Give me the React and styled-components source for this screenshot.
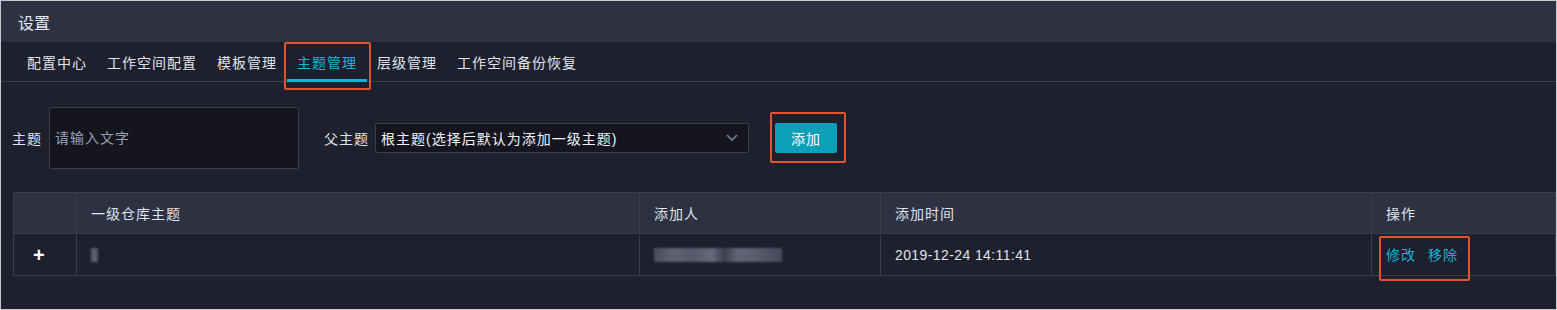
import React from "react";
import styled, { createGlobalStyle } from "styled-components";

const GlobalStyle = createGlobalStyle`
  html, body {
    margin: 0;
    padding: 0;
    background: #ffffff;
  }
  body {
    font-family: "Liberation Sans", "Noto Sans CJK SC", sans-serif;
    color: #dfe3ec;
  }
`;

const Frame = styled.div`
  width: 1557px;
  height: 310px;
  box-sizing: border-box;
  border: 1px solid #c9c9c9;
  background: #1f202d;
  overflow: hidden;
`;

const Header = styled.div`
  height: 41px;
  display: flex;
  align-items: center;
  padding-left: 17px;
  background: #2e3142;
  font-size: 16px;
  color: #e6e9f0;
`;

const Tabs = styled.div`
  height: 40px;
  box-sizing: border-box;
  display: flex;
  padding-left: 16px;
  border-bottom: 1px solid #3a3c4f;
`;

const Tab = styled.div`
  position: relative;
  display: flex;
  align-items: center;
  padding: 0 10px;
  font-size: 14px;
  letter-spacing: 1px;
  color: ${(p) => (p.$active ? "#16b7d4" : "#dfe3ec")};
  &::before {
    content: "";
    display: ${(p) => (p.$active ? "block" : "none")};
    position: absolute;
    left: 0;
    right: 0;
    bottom: -1px;
    height: 3px;
    background: #10b5d6;
  }
`;

const Marked = styled.div`
  position: relative;
  display: flex;
  &::after {
    content: "";
    position: absolute;
    top: ${(p) => p.$t}px;
    left: ${(p) => p.$l}px;
    right: ${(p) => p.$r}px;
    bottom: ${(p) => p.$b}px;
    border: 2px solid #e5522f;
    border-radius: 2px;
    pointer-events: none;
  }
`;

const Form = styled.div`
  display: flex;
  align-items: center;
  margin-top: 25px;
  padding-left: 11px;
`;

const Label = styled.span`
  font-size: 14px;
  letter-spacing: 1px;
  color: #dfe3ec;
  margin-right: ${(p) => p.$gap}px;
  margin-left: ${(p) => p.$lead || 0}px;
`;

const TextInput = styled.input`
  width: 250px;
  height: 62px;
  box-sizing: border-box;
  padding: 0 0 0 5px;
  background: #14151e;
  border: 1px solid #3a3c4f;
  border-radius: 2px;
  outline: none;
  font-family: inherit;
  font-size: 14px;
  letter-spacing: 1px;
  color: #dfe3ec;
  &::placeholder {
    color: #9aa0b4;
  }
`;

const Select = styled.div`
  width: 374px;
  height: 30px;
  box-sizing: border-box;
  display: flex;
  align-items: center;
  justify-content: space-between;
  padding: 0 9px 0 5px;
  background: #14151e;
  border: 1px solid #3a3c4f;
  border-radius: 2px;
  font-size: 14px;
  letter-spacing: 1px;
  color: #f0f2f6;
`;

const Button = styled.button`
  width: 62px;
  height: 30px;
  border: none;
  border-radius: 2px;
  background: #0d9fba;
  color: #ffffff;
  font-family: inherit;
  font-size: 14px;
  letter-spacing: 1px;
  padding: 0;
`;

const ButtonSlot = styled.div`
  margin-left: 26px;
`;

const Table = styled.div`
  margin: 23px 0 0 12px;
  border-top: 1px solid #3a3c4f;
  border-left: 1px solid #3a3c4f;
`;

const Row = styled.div`
  display: grid;
  grid-template-columns: 63px 563px 241px 491px 1fr;
  height: ${(p) => (p.$head ? 41 : 42)}px;
  background: ${(p) => (p.$head ? "#2e3142" : "#1f202d")};
`;

const Cell = styled.div`
  display: flex;
  align-items: center;
  box-sizing: border-box;
  padding-left: ${(p) => p.$pad ?? 14}px;
  border-right: 1px solid #3a3c4f;
  border-bottom: 1px solid #3a3c4f;
  font-size: 14px;
  letter-spacing: ${(p) => (p.$mono ? 0.4 : 1)}px;
  color: #dfe3ec;
`;

const Plus = styled.span`
  font-size: 20px;
  font-weight: bold;
  color: #ffffff;
  line-height: 1;
`;

const Blur = styled.div`
  width: ${(p) => p.$w}px;
  height: ${(p) => p.$h}px;
  background: linear-gradient(
    90deg,
    #4d5163 0%,
    #686b7c 15%,
    #5a5e70 30%,
    #717386 45%,
    #3e4254 55%,
    #6a6d80 65%,
    #5f6375 80%,
    #4a4e60 100%
  );
  filter: blur(1.2px);
  opacity: 0.9;
`;

const Actions = styled.div`
  display: flex;
  gap: 12px;
  line-height: 20px;
`;

const Link = styled.span`
  color: #14b3d3;
  font-size: 14px;
  letter-spacing: 1px;
`;

const Chevron = () => (
  <svg width="14" height="10" viewBox="0 0 14 10">
    <polyline
      points="2,2 7,7 12,2"
      fill="none"
      stroke="#7a819a"
      strokeWidth="1.6"
    />
  </svg>
);

const tabs = ["配置中心", "工作空间配置", "模板管理", "主题管理", "层级管理", "工作空间备份恢复"];

export default function App() {
  return (
    <>
      <GlobalStyle />
      <Frame>
        <Header>设置</Header>
        <Tabs>
          {tabs.map((t) =>
            t === "主题管理" ? (
              <Marked key={t} $t={0} $l={-3} $r={-4} $b={-9}>
                <Tab $active>{t}</Tab>
              </Marked>
            ) : (
              <Tab key={t}>{t}</Tab>
            )
          )}
        </Tabs>
        <Form>
          <Label $gap={7}>主题</Label>
          <TextInput placeholder="请输入文字" />
          <Label $lead={25} $gap={6}>父主题</Label>
          <Select>
            <span>根主题(选择后默认为添加一级主题)</span>
            <Chevron />
          </Select>
          <ButtonSlot>
            <Marked $t={-11} $l={-5} $r={-9} $b={-10}>
              <Button>添加</Button>
            </Marked>
          </ButtonSlot>
        </Form>
        <Table>
          <Row $head>
            <Cell />
            <Cell>一级仓库主题</Cell>
            <Cell>添加人</Cell>
            <Cell>添加时间</Cell>
            <Cell>操作</Cell>
          </Row>
          <Row>
            <Cell $pad={19}>
              <Plus>+</Plus>
            </Cell>
            <Cell>
              <Blur $w={7} $h={14} />
            </Cell>
            <Cell>
              <Blur $w={128} $h={14} />
            </Cell>
            <Cell $mono>2019-12-24 14:11:41</Cell>
            <Cell>
              <Marked $t={-9} $l={-7} $r={-12} $b={-16}>
                <Actions>
                  <Link>修改</Link>
                  <Link>移除</Link>
                </Actions>
              </Marked>
            </Cell>
          </Row>
        </Table>
      </Frame>
    </>
  );
}
